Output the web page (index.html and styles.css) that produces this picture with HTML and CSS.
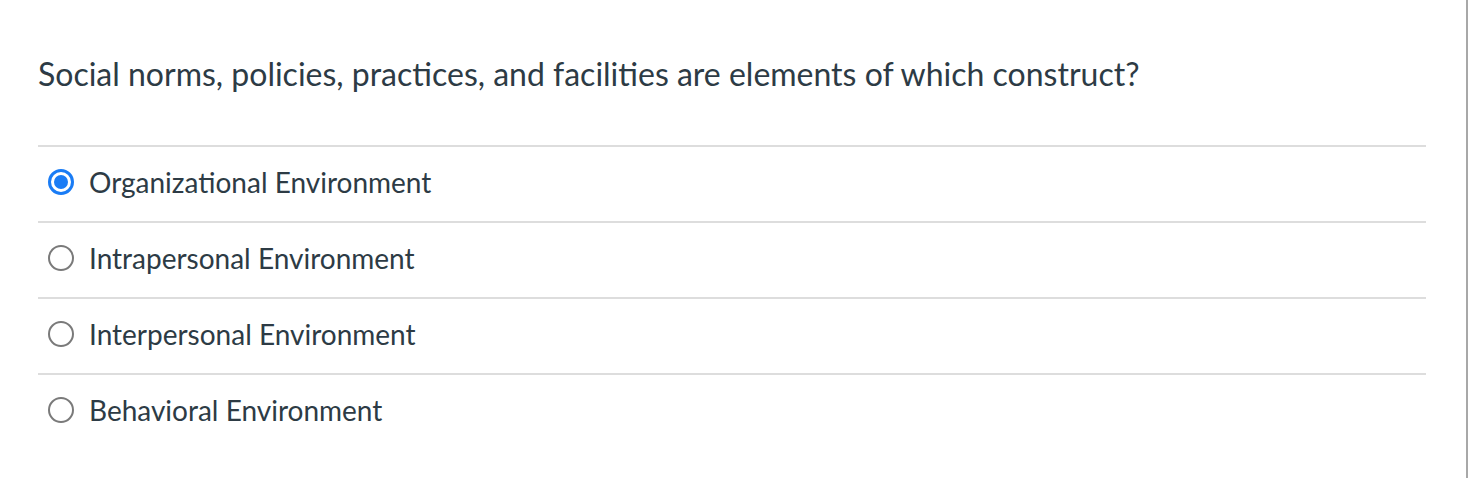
FILE: index.html
```html
<!DOCTYPE html>
<html>
<head>
<meta charset="utf-8">
<link rel="stylesheet" href="styles.css">
</head>
<body>
<div class="page">
  <div class="quiz">
    <div class="question">Social norms, policies, practices, and facilities are elements of which construct?</div>
    <div class="answers">
      <label class="answer">
        <span class="radio checked"><span class="dot"></span></span>
        <span class="label">Organizational Environment</span>
      </label>
      <label class="answer">
        <span class="radio"></span>
        <span class="label">Intrapersonal Environment</span>
      </label>
      <label class="answer">
        <span class="radio"></span>
        <span class="label">Interpersonal Environment</span>
      </label>
      <label class="answer">
        <span class="radio"></span>
        <span class="label">Behavioral Environment</span>
      </label>
    </div>
  </div>
  <div class="scrollbar"></div>
</div>
</body>
</html>
```

FILE: styles.css
```css
html, body {
  margin: 0;
  padding: 0;
  background: #fff;
}
body {
  font-family: Lato, "Liberation Sans", sans-serif;
  color: #2d3b45;
}
.page {
  display: flex;
  width: 1468px;
  height: 478px;
}
.quiz {
  flex: 1;
  padding: 0 40px 0 38px;
}
.question {
  font-size: 32px;
  line-height: 40px;
  padding-top: 54px;
  box-sizing: border-box;
  height: 145px;
}
.answers {
  display: flex;
  flex-direction: column;
}
.answer {
  display: flex;
  align-items: center;
  height: 70px;
  padding: 0 0 4px 10px;
  border-top: 2px solid #dddddd;
  gap: 15px;
}
.radio {
  width: 26px;
  height: 26px;
  box-sizing: border-box;
  border-radius: 50%;
  border: 2px solid #7a7a7a;
  display: flex;
  align-items: center;
  justify-content: center;
  background: #fff;
}
.radio.checked {
  border: 3px solid #1a7cf5;
}
.radio .dot {
  width: 14px;
  height: 14px;
  border-radius: 50%;
  background: #1a7cf5;
}
.label {
  font-size: 28px;
  line-height: 34px;
}
.scrollbar {
  width: 2px;
  background: #a8a8a8;
}
```
